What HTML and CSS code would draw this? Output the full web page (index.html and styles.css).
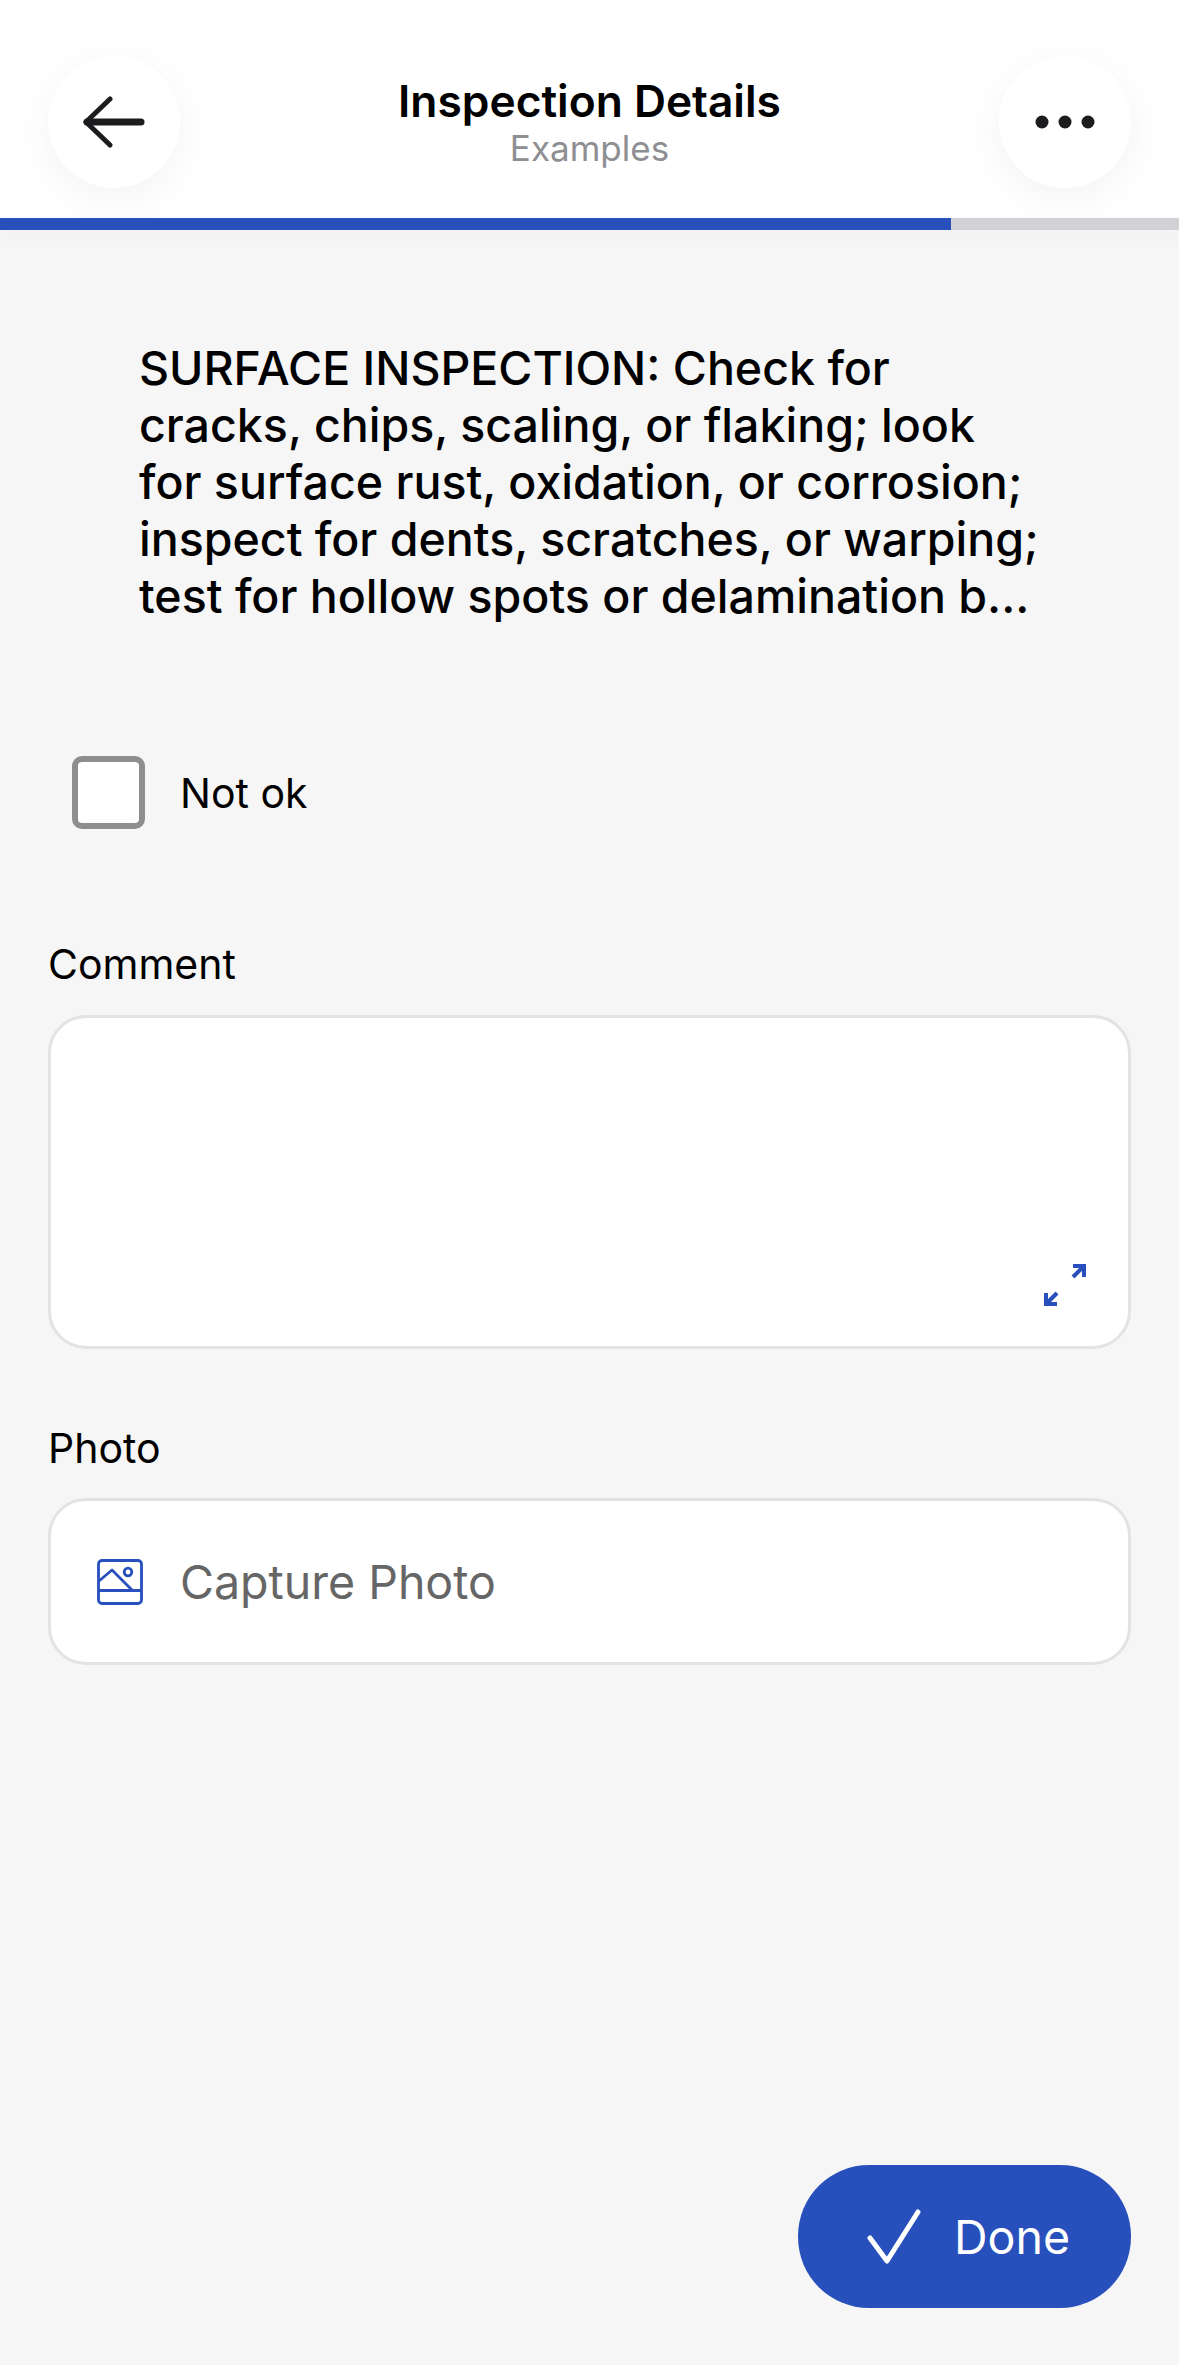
FILE: index.html
```html
<!DOCTYPE html>
<html lang="en">
<head>
    <meta charset="UTF-8">
    <meta name="viewport" content="width=device-width, initial-scale=1.0">
    <title>Inspection Details</title>
    <link rel="stylesheet" href="styles.css">
</head>
<body>

<div class="page">
    <header class="topbar">
        <button class="round-btn">
            <svg width="62" height="52" viewBox="0 0 62 52" fill="none" stroke="#1c1c1e" stroke-linecap="round" stroke-linejoin="round">
                <path d="M4 26H58" stroke-width="7"/>
                <path d="M27 3L3 26L27 49" stroke-width="5"/>
            </svg>
        </button>
        <div class="title-block">
            <div class="title">Inspection Details</div>
            <div class="subtitle">Examples</div>
        </div>
        <button class="round-btn">
            <svg width="60" height="14" viewBox="0 0 60 14" fill="#1c1c1e">
                <circle cx="7" cy="7" r="6.5"/>
                <circle cx="30" cy="7" r="6.5"/>
                <circle cx="53" cy="7" r="6.5"/>
            </svg>
        </button>
    </header>

    <div class="progress">
        <div class="progress-fill"></div>
    </div>

    <main class="content">
        <p class="description">SURFACE INSPECTION: Check for<br>cracks, chips, scaling, or flaking; look<br>for surface rust, oxidation, or corrosion;<br>inspect for dents, scratches, or warping;<br>test for hollow spots or delamination b...</p>

        <label class="check-row">
            <span class="checkbox"></span>
            <span class="check-label">Not ok</span>
        </label>

        <div class="field-label comment-label">Comment</div>
        <div class="comment-box">
            <svg class="expand-icon" width="42" height="42" viewBox="0 0 42 42" fill="none" stroke="#2750bd" stroke-width="4">
                <path d="M29 2H40V13"/>
                <path d="M40 2L29 13"/>
                <path d="M2 29V40H13"/>
                <path d="M2 40L13 29"/>
            </svg>
        </div>

        <div class="field-label photo-label">Photo</div>
        <div class="photo-box">
            <svg class="photo-icon" width="46" height="46" viewBox="0 0 46 46" fill="none" stroke="#2750bd" stroke-width="2.8" stroke-linejoin="round">
                <rect x="1.5" y="1.5" width="43" height="43" rx="3.5"/>
                <path d="M1.5 31.5H44.5"/>
                <path d="M2 22L15 11L35 31"/>
                <circle cx="31" cy="13" r="3.8"/>
            </svg>
            <span class="photo-text">Capture Photo</span>
        </div>
    </main>

    <div class="footer">
        <button class="done-btn">
            <svg width="54" height="55" viewBox="0 0 54 55" fill="none" stroke="#fff" stroke-width="5" stroke-linecap="round" stroke-linejoin="round">
                <path d="M3 29L20 52L51 3"/>
            </svg>
            <span>Done</span>
        </button>
    </div>
</div>

</body>
</html>
```

FILE: styles.css
```css
* {
    box-sizing: border-box;
}

body {
    margin: 0;
    padding: 0;
    background-color: #f6f6f6;
    font-family: Inter, "Liberation Sans", sans-serif;
    color: #000;
}

.page {
    width: 1179px;
    height: 2365px;
    display: flex;
    flex-direction: column;
    overflow: hidden;
}

.topbar {
    height: 218px;
    background-color: #fff;
    padding: 56px 48px 0 48px;
    display: flex;
    justify-content: space-between;
    align-items: flex-start;
}

.round-btn {
    width: 132px;
    height: 132px;
    border: none;
    border-radius: 50%;
    background-color: #fff;
    box-shadow: 0 10px 40px rgba(0, 0, 0, 0.05);
    display: flex;
    align-items: center;
    justify-content: center;
    padding: 0;
}

.title-block {
    text-align: center;
    padding-top: 15px;
}

.title {
    font-size: 44.3px;
    line-height: 60px;
    font-weight: 600;
}

.subtitle {
    font-size: 35px;
    line-height: 35px;
    color: #8e8e93;
}

.progress {
    height: 12px;
    background-color: #d1d1d6;
    box-shadow: 0 6px 20px rgba(0, 0, 0, 0.03);
}

.progress-fill {
    width: 951px;
    height: 100%;
    background-color: #2750bd;
}

.content {
    flex: 1;
    padding: 0 48px;
}

.description {
    margin: 110px 0 0 91px;
    font-size: 46.5px;
    line-height: 57px;
    font-weight: 500;
    white-space: nowrap;
}

.check-row {
    display: flex;
    align-items: center;
    gap: 35px;
    margin: 131px 0 0 24px;
}

.checkbox {
    width: 73px;
    height: 73px;
    background-color: #fff;
    border: 6px solid #8e8e8e;
    border-radius: 10px;
}

.check-label {
    font-size: 41px;
}

.field-label {
    font-size: 41px;
    line-height: 50px;
}

.comment-label {
    margin-top: 110px;
}

.photo-label {
    margin-top: 74px;
}

.comment-box,
.photo-box {
    background-color: #fff;
    border: 3px solid #e3e3e3;
    border-radius: 38px;
}

.comment-box {
    height: 334px;
    margin-top: 26px;
    display: flex;
    align-items: flex-end;
    justify-content: flex-end;
    padding: 0 42px 40px 0;
}

.photo-box {
    height: 167px;
    margin-top: 25px;
    display: flex;
    align-items: center;
    padding-left: 46px;
}

.photo-text {
    font-size: 46.5px;
    color: #666;
    margin-left: 37px;
}

.footer {
    display: flex;
    justify-content: flex-end;
    padding: 0 48px 57px 0;
}

.done-btn {
    width: 333px;
    height: 143px;
    border: none;
    border-radius: 71px;
    background-color: #2750bd;
    color: #fff;
    font-family: inherit;
    font-size: 46.5px;
    display: flex;
    align-items: center;
    justify-content: center;
    gap: 33px;
    padding: 0 0 0 8px;
}
```
